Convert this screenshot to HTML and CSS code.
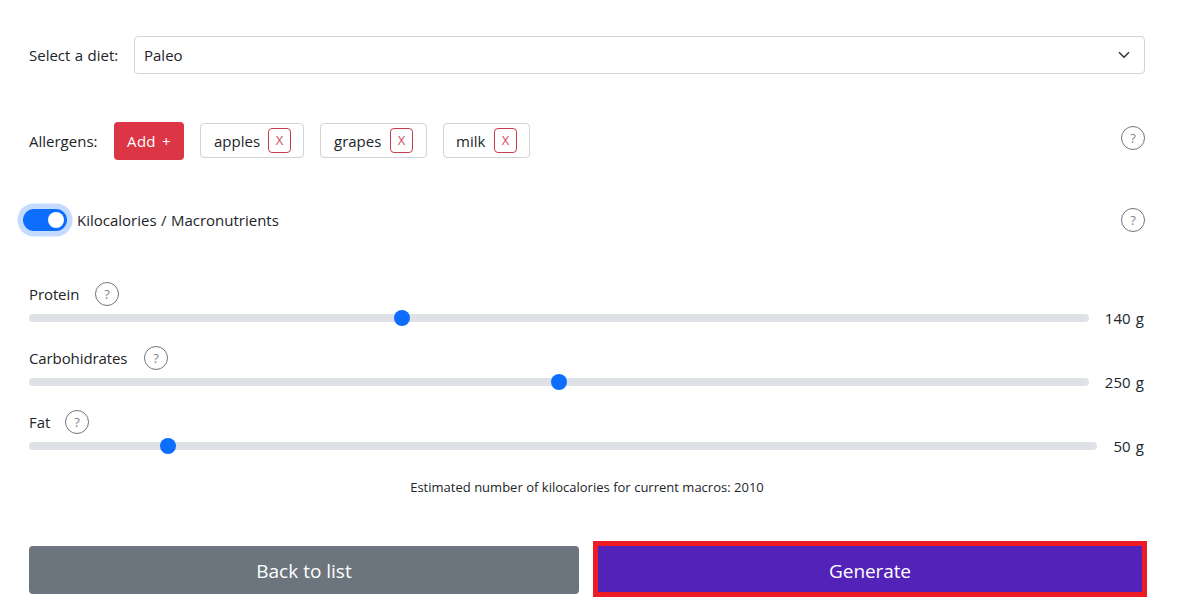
FILE: index.html
```
<!DOCTYPE html>
<html lang="en">
<head>
<meta charset="utf-8">
<title>Diet generator</title>
<link rel="stylesheet" href="styles.css">
</head>
<body>
<main class="form">
  <div class="row diet">
    <label class="diet-label"><span>Select a diet:</span></label>
    <div class="select"><span>Paleo</span>
      <svg class="chevron" viewBox="0 0 16 16" width="12" height="12"><path d="m2 5 6 6 6-6" fill="none" stroke="#343a40" stroke-width="2.2" stroke-linecap="round" stroke-linejoin="round"/></svg>
    </div>
  </div>
  <div class="row allergens">
    <span class="allergen-label"><span>Allergens:</span></span>
    <button class="add"><span>Add +</span></button>
    <div class="tag apples"><span>apples</span><button class="remove">X</button></div>
    <div class="tag grapes"><span>grapes</span><button class="remove">X</button></div>
    <div class="tag milk"><span>milk</span><button class="remove">X</button></div>
    <button class="help end">?</button>
  </div>
  <div class="row toggle-row">
    <span class="switch"><span class="knob"></span></span>
    <span class="toggle-label">Kilocalories / Macronutrients</span>
    <button class="help end">?</button>
  </div>
  <section class="macro">
    <div class="macro-head"><span class="name protein">Protein</span><button class="help">?</button></div>
    <div class="macro-range"><div class="track"><span class="thumb" style="left:365px"></span></div><span class="value">140 g</span></div>
  </section>
  <section class="macro">
    <div class="macro-head"><span class="name carbs">Carbohidrates</span><button class="help">?</button></div>
    <div class="macro-range"><div class="track"><span class="thumb" style="left:522px"></span></div><span class="value">250 g</span></div>
  </section>
  <section class="macro">
    <div class="macro-head"><span class="name fat">Fat</span><button class="help">?</button></div>
    <div class="macro-range"><div class="track"><span class="thumb" style="left:131px"></span></div><span class="value short">50 g</span></div>
  </section>
  <p class="estimate">Estimated number of kilocalories for current macros: 2010</p>
  <div class="actions">
    <button class="back"><span>Back to list</span></button>
    <button class="generate"><span>Generate</span></button>
  </div>
</main>
</body>
</html>
```
FILE: styles.css
```
* { box-sizing: border-box; }
body { margin: 0; background: #fff; color: #212529; font: 15px/24px "Open Sans", "Noto Sans", sans-serif; word-spacing: 0.5px; white-space: nowrap; overflow: hidden; }
button { font: inherit; padding: 0; margin: 0; white-space: nowrap; }
.form { width: 1189px; height: 616px; padding: 36px 44px 0 29px; }
.row { display: flex; align-items: center; }
.diet { height: 38px; }
.diet-label { width: 105px; }
.select { flex: 1; height: 38px; border: 1px solid #ced4da; border-radius: 4px; padding: 0 14px 0 9px; display: flex; align-items: center; justify-content: space-between; }
.allergens { margin-top: 48px; height: 38px; }
.allergen-label { width: 85px; }
.add { width: 70px; height: 38px; border: 0; border-radius: 4px; background: #dc3545; color: #fff; letter-spacing: 0.3px; word-spacing: 2px; }
.tag { height: 35px; margin: 0 0 2px 16px; border: 1px solid #ced4da; border-radius: 4px; padding: 0 12px 0 13px; display: flex; align-items: center; justify-content: space-between; }
.tag span { padding-top: 2px; }
.apples { width: 104px; }
.grapes { width: 107px; padding-right: 13px; }
.milk { width: 87px; padding-left: 12px; }
.remove { width: 23px; height: 25px; border: 1px solid #c63c4e; border-radius: 4px; background: #fff; color: #cf5060; font-size: 13px; line-height: 22px; }
.help { width: 24px; height: 24px; flex: none; border: 1px solid #6c757d; border-radius: 50%; background: #fff; color: #808489; font-size: 13px; line-height: 22px; text-align: center; }
.end { margin-left: auto; }
.allergens .end { margin-bottom: 6px; }
.toggle-row { height: 24px; margin-top: 48px; margin-left: -6px; }
.switch { width: 44px; height: 22px; border-radius: 11px; background: #0d6efd; box-shadow: 0 0 0 5.5px #c2dbfe; padding: 3px; display: flex; justify-content: flex-end; }
.knob { width: 16px; height: 16px; border-radius: 50%; background: #fff; }
.toggle-label { margin-left: 10px; }
.macro { height: 64px; }
.toggle-row + .macro { margin-top: 50px; }
.macro-head { display: flex; align-items: center; height: 24px; }
.name { letter-spacing: -0.1px; }
.protein { width: 66px; }
.carbs { width: 115px; }
.fat { width: 36px; }
.macro-range { display: flex; align-items: center; height: 24px; }
.track { position: relative; flex: 1; height: 8px; border-radius: 4px; background: #dee2e6; }
.thumb { position: absolute; top: -4px; width: 16px; height: 16px; border-radius: 50%; background: #0d6efd; }
.value { width: 56px; text-align: right; padding-right: 1px; letter-spacing: 0.1px; word-spacing: 1px; }
.short { width: 48px; }
.estimate { margin: 1px 0 0; height: 24px; text-align: center; font-size: 13px; word-spacing: 0.1px; }
.actions { display: flex; gap: 14px; margin: 42px -2px 0 0; align-items: flex-start; }
.back { width: 550px; height: 48px; margin-top: 5px; border: 0; border-radius: 4px; background: #6c757d; color: #fff; font-size: 19px; word-spacing: 0; padding-top: 1px; }
.generate { width: 554px; height: 56px; border: 5px solid #ed1c24; background: #5222b9; color: #fff; font-size: 19px; letter-spacing: -0.1px; padding-top: 3px; }
```
